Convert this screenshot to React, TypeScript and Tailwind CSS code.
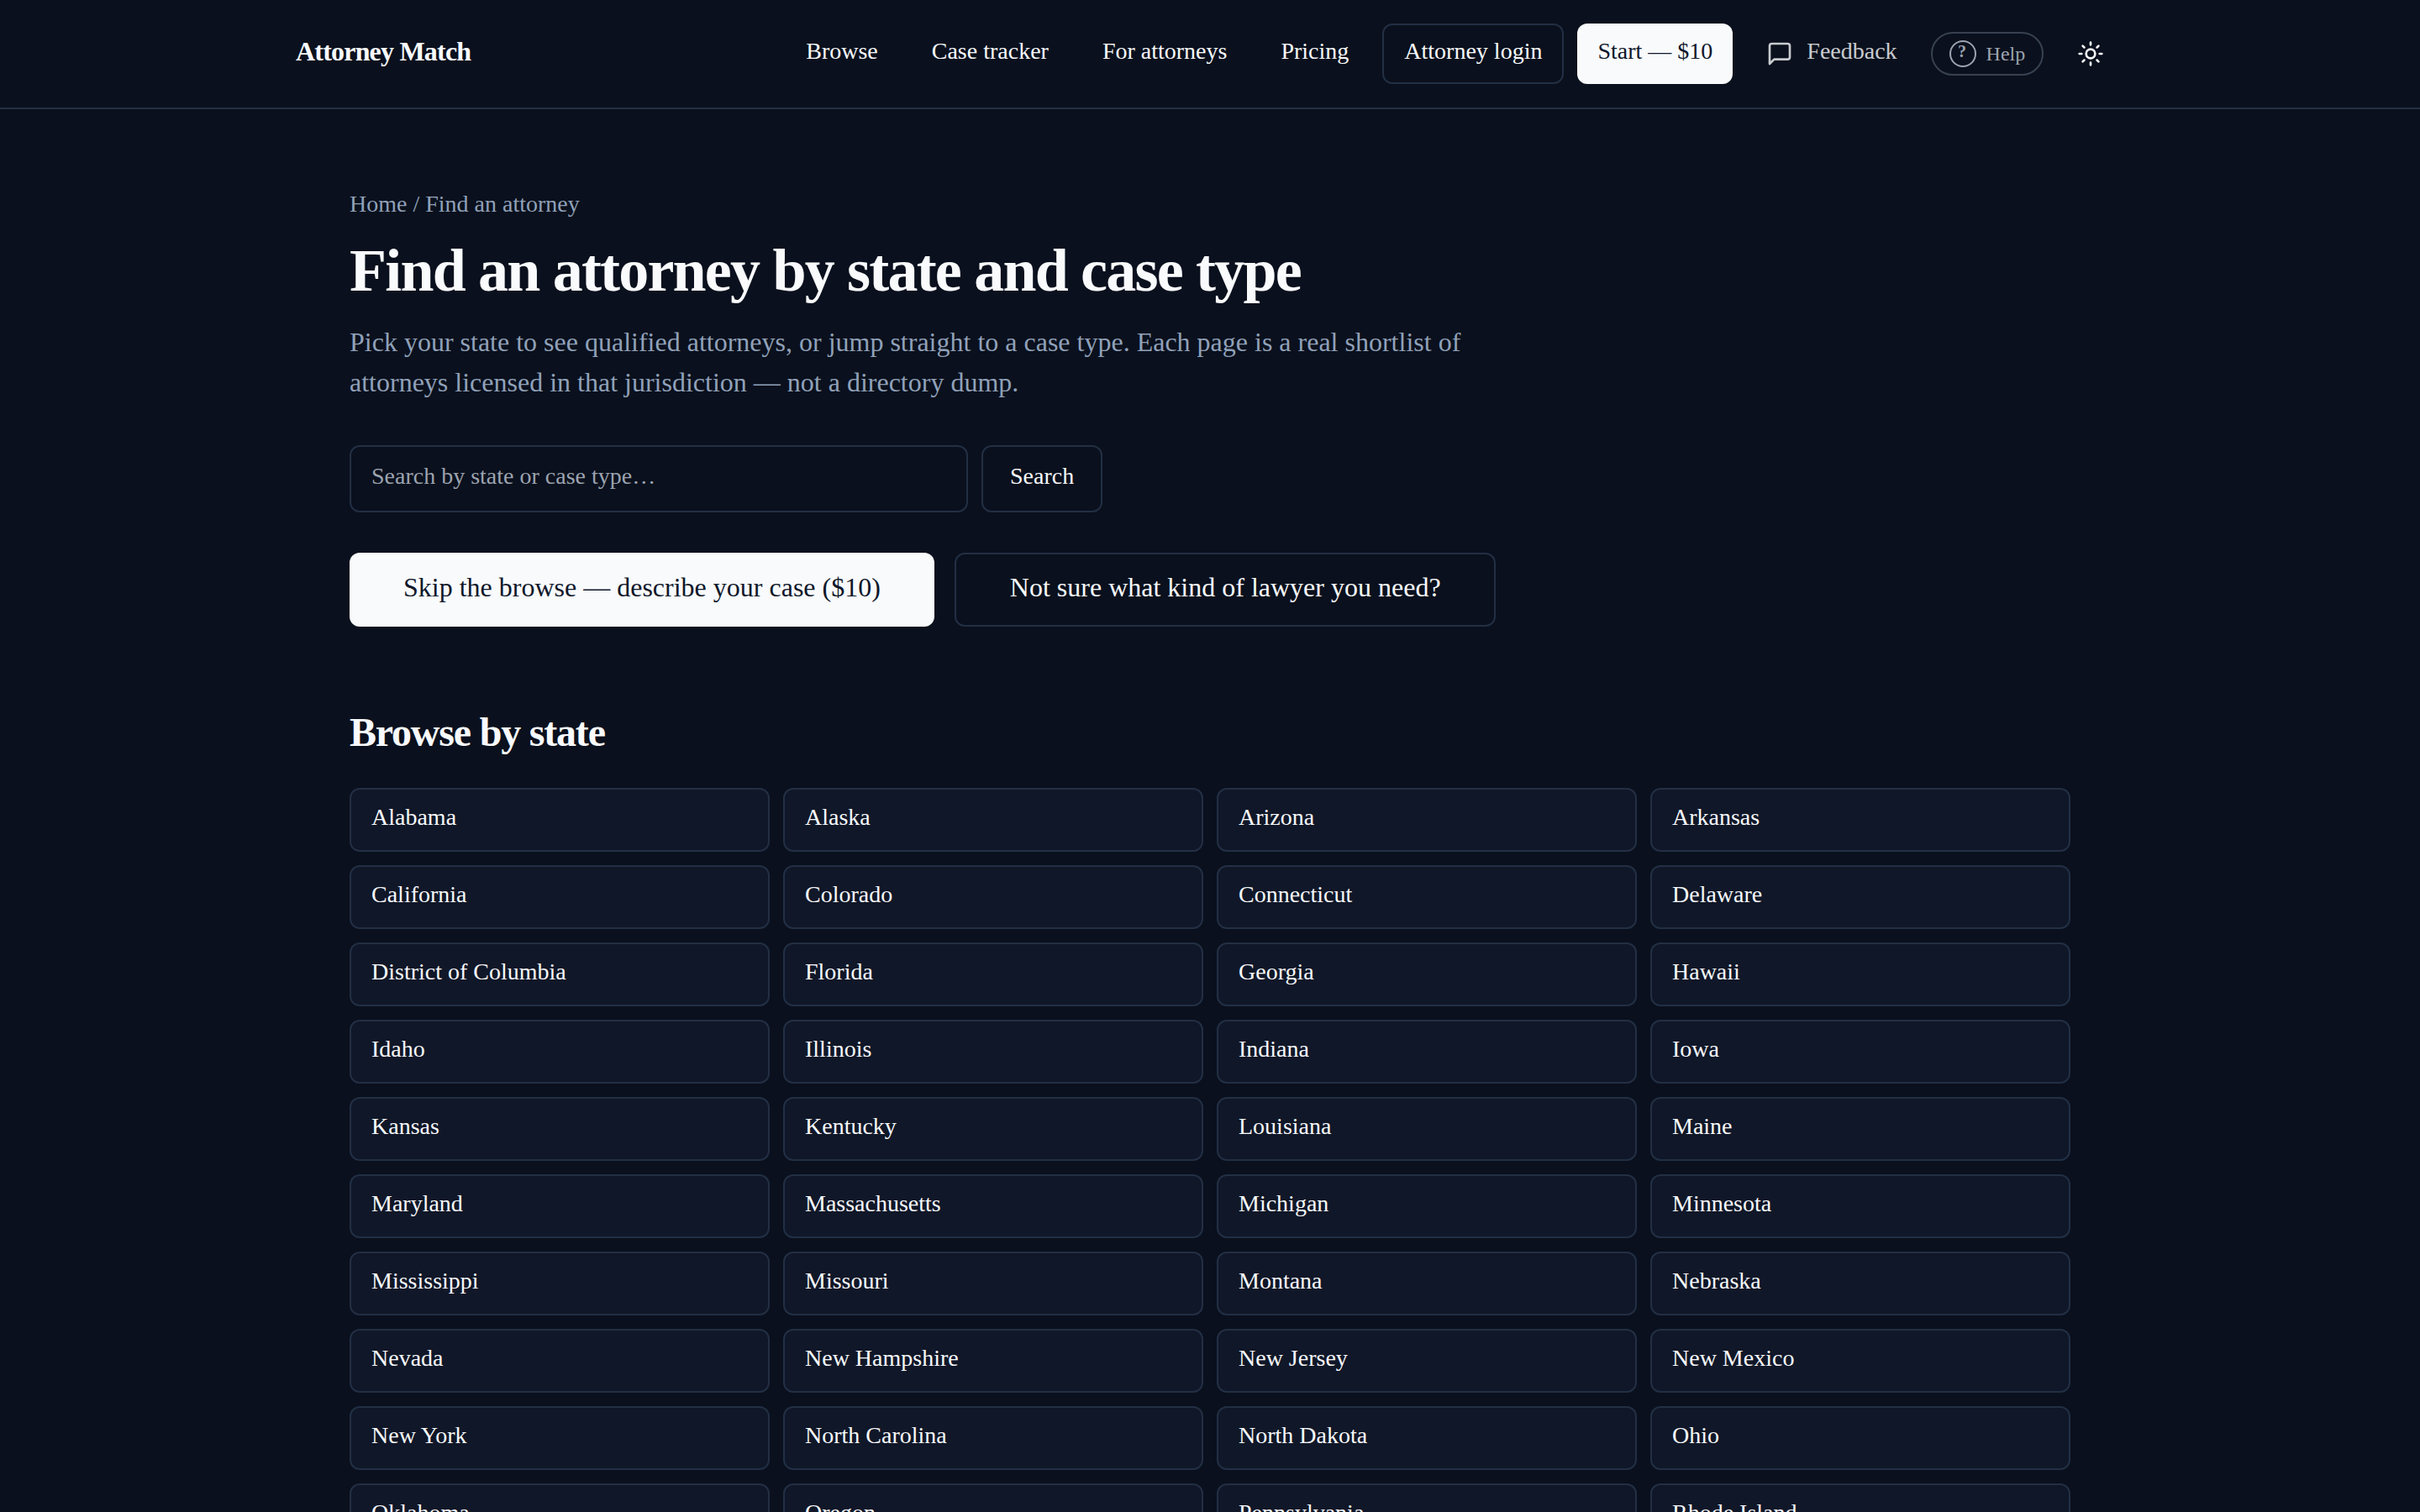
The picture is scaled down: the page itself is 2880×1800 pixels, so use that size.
const STATES = [
  'Alabama', 'Alaska', 'Arizona', 'Arkansas',
  'California', 'Colorado', 'Connecticut', 'Delaware',
  'District of Columbia', 'Florida', 'Georgia', 'Hawaii',
  'Idaho', 'Illinois', 'Indiana', 'Iowa',
  'Kansas', 'Kentucky', 'Louisiana', 'Maine',
  'Maryland', 'Massachusetts', 'Michigan', 'Minnesota',
  'Mississippi', 'Missouri', 'Montana', 'Nebraska',
  'Nevada', 'New Hampshire', 'New Jersey', 'New Mexico',
  'New York', 'North Carolina', 'North Dakota', 'Ohio',
  'Oklahoma', 'Oregon', 'Pennsylvania', 'Rhode Island',
];

const NAV_LINKS = ['Browse', 'Case tracker', 'For attorneys', 'Pricing'];

function MessageIcon() {
  return (
    <svg className="size-8 shrink-0" viewBox="0 0 24 24" fill="none" stroke="currentColor" strokeWidth="2" strokeLinecap="round" strokeLinejoin="round">
      <path d="M21 15a2 2 0 0 1-2 2H7l-4 4V5a2 2 0 0 1 2-2h14a2 2 0 0 1 2 2z" />
    </svg>
  );
}

function SunIcon() {
  return (
    <svg className="size-8" viewBox="0 0 24 24" fill="none" stroke="currentColor" strokeWidth="2" strokeLinecap="round" strokeLinejoin="round">
      <circle cx="12" cy="12" r="4" />
      <path d="M12 2v2M12 20v2M4.93 4.93l1.41 1.41M17.66 17.66l1.41 1.41M2 12h2M20 12h2M6.34 17.66l-1.41 1.41M19.07 4.93l-1.41 1.41" />
    </svg>
  );
}

function Header() {
  return (
    <header className="border-b-2 border-[#222f44]">
      <div className="mx-auto flex h-32 max-w-[2304px] items-center justify-between px-16">
        <a className="pb-1.5 text-[32px] leading-[48px] font-bold tracking-tight">Attorney Match</a>
        <nav className="flex items-center gap-4 text-[28px] leading-10 whitespace-nowrap">
          {NAV_LINKS.map((label) => (
            <a key={label} className="flex h-[72px] items-center px-6 pb-[7px]">{label}</a>
          ))}
          <a className="flex h-[72px] items-center rounded-xl border-2 border-[#222f44] px-6 pb-[7px]">Attorney login</a>
          <a className="flex h-[72px] items-center rounded-xl bg-slate-50 px-6 pb-[7px] text-[#0f172a]">Start — $10</a>
          <button className="flex h-[72px] items-center gap-4 px-6 opacity-80">
            <MessageIcon />
            <span className="pb-[7px]">Feedback</span>
          </button>
          <button className="flex h-[52px] w-[134.4px] items-center gap-3 rounded-full border-2 border-[#374151] pl-5 text-2xl text-[#9ca3af]">
            <span className="flex size-8 shrink-0 items-center justify-center rounded-full border-2 border-[#9ca3af] pr-px pb-[7px] text-[20px] leading-none font-semibold">?</span>
            <span>Help</span>
          </button>
          <button className="flex h-[72px] w-20 items-center justify-center">
            <SunIcon />
          </button>
        </nav>
      </div>
    </header>
  );
}

export default function App() {
  return (
    <div className="h-[1800px] overflow-hidden bg-[#0a101d] font-['Liberation_Serif',serif] text-slate-50">
      <Header />
      <main className="mx-auto max-w-[2048px] pt-[93px]">
        <div className="text-[28px] leading-10 text-slate-400">Home / Find an attorney</div>
        <h1 className="mt-[19px] text-[72px] leading-[80px] font-bold tracking-tight">Find an attorney by state and case type</h1>
        <p className="mt-[21px] max-w-[1344px] text-[32px] leading-[48px] text-slate-400">
          Pick your state to see qualified attorneys, or jump straight to a case type. Each page is a real shortlist of attorneys licensed in that jurisdiction — not a directory dump.
        </p>
        <form className="mt-[51px] flex gap-4 text-[28px] leading-10">
          <input
            className="h-20 w-[736px] rounded-xl border-2 border-[#222f44] bg-transparent px-6 pb-[7px] placeholder:text-[#9ca3af]"
            placeholder="Search by state or case type…"
          />
          <button type="button" className="h-20 rounded-xl border-2 border-[#222f44] px-8 pb-[7px]">Search</button>
        </form>
        <div className="mt-12 flex gap-6 text-[32px] leading-[48px] whitespace-nowrap">
          <a className="flex h-[88px] items-center rounded-xl bg-slate-50 px-16 pb-1.5 text-[#0f172a]">Skip the browse — describe your case ($10)</a>
          <a className="flex h-[88px] w-[644px] items-center rounded-xl border-2 border-[#222f44] pb-1.5 pl-16">Not sure what kind of lawyer you need?</a>
        </div>
        <h2 className="mt-[94px] text-5xl leading-[64px] font-bold tracking-tight">Browse by state</h2>
        <div className="mt-[34px] grid grid-cols-4 gap-4">
          {STATES.map((name) => (
            <a key={name} className="flex h-[76px] items-center rounded-xl border-2 border-[#222f44] bg-[#101728] px-6 pb-[7px] text-[28px] leading-10">{name}</a>
          ))}
        </div>
      </main>
    </div>
  );
}
